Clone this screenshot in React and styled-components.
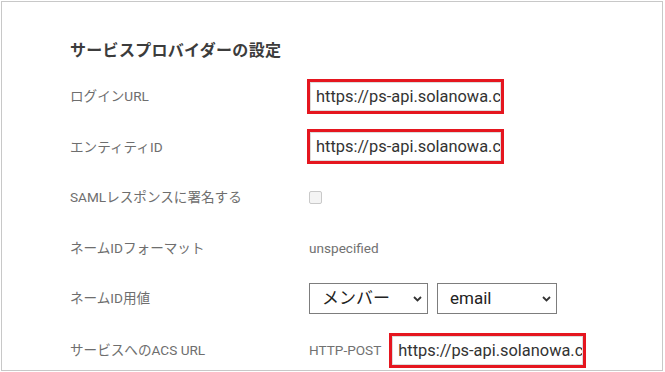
import React from "react";
import styled, { createGlobalStyle } from "styled-components";

const Global = createGlobalStyle`
  html, body { margin: 0; padding: 0; background: #fff; }
  body { font-family: Roboto, "Noto Sans CJK JP", sans-serif; }
  * { box-sizing: border-box; }
`;

const Panel = styled.div`
  margin: 1px 0 0 1px;
  width: 662px;
  height: 370px;
  border: 1px solid #c8c8c8;
  padding: 34px 0 0 68px;
  overflow: hidden;
`;

const Title = styled.h2`
  margin: 0 0 5px;
  font-size: 16px;
  line-height: 30px;
  font-weight: 700;
  color: #3c3c3c;
  letter-spacing: 0.3px;
`;

const Row = styled.div`
  display: grid;
  grid-template-columns: 239px 1fr;
  align-items: center;
  height: ${(p) => p.$h || 50.5}px;
`;

const Label = styled.div`
  font-size: 13.6px;
  color: #6e6e6e;
  line-height: 18px;
`;

const Value = styled.div`
  display: flex;
  align-items: center;
  gap: ${(p) => p.$gap || 0}px;
`;

const Mark = styled.div`
  width: 197px;
  height: 35px;
  border: 3px solid #e5161f;
  margin-left: ${(p) => p.$ml ?? -2}px;
  background: #fff;
`;

const TextInput = styled.input`
  display: block;
  width: 100%;
  height: 100%;
  border: 1px solid #dcdcdc;
  padding: 0 0 0 5px;
  font-family: Roboto, "Noto Sans CJK JP", sans-serif;
  font-size: 16.4px;
  color: #333;
  background: #fff;
  outline: none;
`;

const Check = styled.span`
  display: inline-block;
  width: 13px;
  height: 13px;
  border: 1px solid #c9c9c9;
  border-radius: 2px;
  background: #f4f4f4;
  margin-top: 1px;
`;

const Plain = styled.span`
  font-size: 13.6px;
  color: #717171;
`;

const SelectWrap = styled.div`
  position: relative;
  width: ${(p) => p.$w}px;
  height: 31px;
`;

const Select = styled.select`
  appearance: none;
  -webkit-appearance: none;
  width: 100%;
  height: 100%;
  border: 1px solid #7d7d7d;
  border-radius: 0;
  background: #fff;
  padding: 0 0 0 12px;
  font-family: Roboto, "Noto Sans CJK JP", sans-serif;
  font-size: 17px;
  color: #222;
  outline: none;
`;

const Chevron = styled.svg`
  position: absolute;
  right: 6px;
  top: 13px;
  width: 9px;
  height: 6px;
  pointer-events: none;
`;

const Arrow = () => (
  <Chevron viewBox="0 0 9 6">
    <path d="M1 1 L4.5 4.5 L8 1" fill="none" stroke="#333" strokeWidth="1.8" />
  </Chevron>
);

const Dropdown = ({ w, value, options }) => (
  <SelectWrap $w={w}>
    <Select defaultValue={value}>
      {options.map((o) => (
        <option key={o}>{o}</option>
      ))}
    </Select>
    <Arrow />
  </SelectWrap>
);

const URL = "https://ps-api.solanowa.com/saml";

export default function App() {
  return (
    <>
      <Global />
      <Panel>
        <Title>サービスプロバイダーの設定</Title>
        <Row>
          <Label>ログインURL</Label>
          <Value>
            <Mark>
              <TextInput readOnly value={URL} />
            </Mark>
          </Value>
        </Row>
        <Row>
          <Label>エンティティID</Label>
          <Value>
            <Mark>
              <TextInput readOnly value={URL} />
            </Mark>
          </Value>
        </Row>
        <Row>
          <Label>SAMLレスポンスに署名する</Label>
          <Value>
            <Check />
          </Value>
        </Row>
        <Row>
          <Label>ネームIDフォーマット</Label>
          <Value>
            <Plain>unspecified</Plain>
          </Value>
        </Row>
        <Row>
          <Label>ネームID用値</Label>
          <Value $gap={9}>
            <Dropdown w={119} value="メンバー" options={["メンバー"]} />
            <Dropdown w={120} value="email" options={["email"]} />
          </Value>
        </Row>
        <Row $h={53}>
          <Label>サービスへのACS URL</Label>
          <Value $gap={8}>
            <Plain>HTTP-POST</Plain>
            <Mark $ml={0}>
              <TextInput readOnly value={URL} />
            </Mark>
          </Value>
        </Row>
      </Panel>
    </>
  );
}
